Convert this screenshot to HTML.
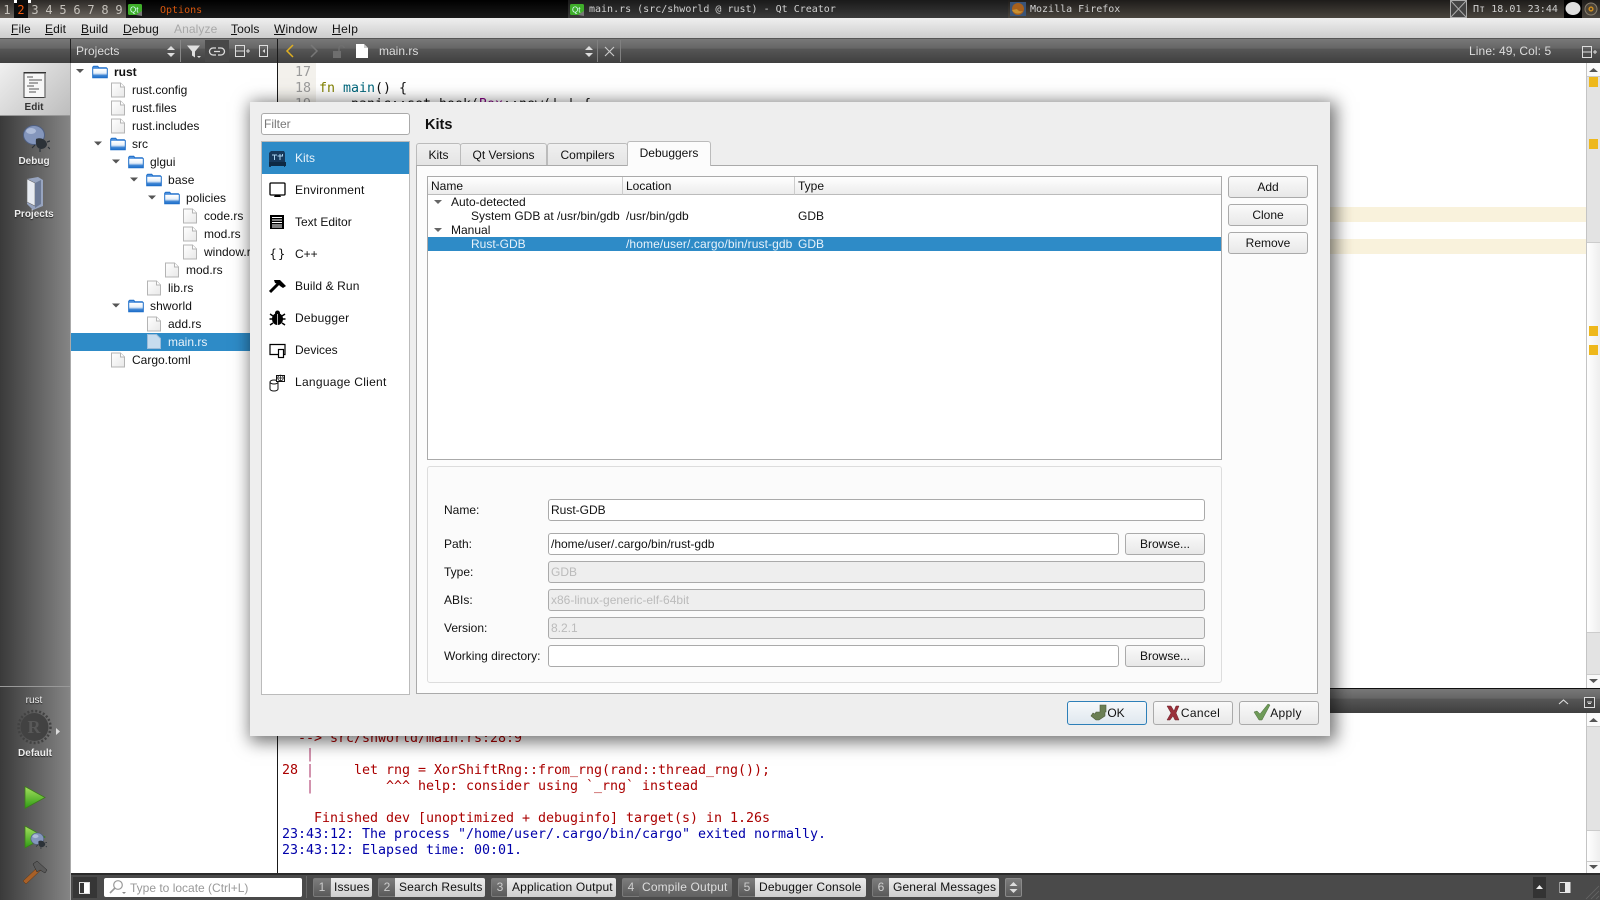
<!DOCTYPE html>
<html><head><meta charset="utf-8"><title>Qt Creator</title>
<style>
html,body{margin:0;padding:0;width:1600px;height:900px;overflow:hidden;background:#fff}
body{position:relative;font:12px/14px "Liberation Sans",sans-serif;color:#111}
.b,.t,svg.l{position:absolute}
.t{white-space:nowrap;height:14px;line-height:14px}
svg.l{left:0;top:0}
.m{font-family:"DejaVu Sans Mono","Liberation Mono",monospace;font-variant-ligatures:none;white-space:pre}
.c{font-size:13.33px;letter-spacing:-.025px;line-height:16px;height:16px}
.tb{font-size:10px;color:#d0d0d0}
.ws{font-size:12px;color:#c4c0ba;width:14px;text-align:center}
u{text-decoration:underline}
.lt{color:#ddd}
.mn{letter-spacing:.1px}
.rl{color:#eee;font-weight:bold;font-size:10px;text-align:center;left:0;width:68px;text-shadow:0 1px 1px #222}
.e{color:#aa0000}.bl{color:#0000aa}
.num{position:absolute;top:878px;height:17px;width:16px;line-height:17px;text-align:center;color:#ccc;background:linear-gradient(#7c7c7c,#5a5a5a);border:1px solid #7a7a7a;border-radius:2px 0 0 2px}
.lab{position:absolute;top:878px;height:19px;line-height:19px;padding-left:5px;box-sizing:border-box;color:#111;background:linear-gradient(#ececec,#cfcfcf);border-radius:0 2px 2px 0;white-space:nowrap;letter-spacing:.15px}
.btn{position:absolute;box-sizing:border-box;height:22px;line-height:20px;text-align:center;border:1px solid #aaa;border-radius:3px;background:linear-gradient(#fafafa,#e8e8e8);color:#111}
.inp{position:absolute;box-sizing:border-box;height:22px;line-height:20px;padding-left:2px;border:1px solid #aaa;border-radius:3px;background:#fff;white-space:nowrap}
.dis{background:#eee;color:#bbb}
.tab{position:absolute;top:143px;height:22px;box-sizing:border-box;line-height:23px;text-align:center;background:linear-gradient(#f0f0f0,#e4e4e4);border:1px solid #bbb;border-bottom:0;border-radius:3px 3px 0 0}
.hd{position:absolute;top:177px;height:18px;line-height:18px;box-sizing:border-box;padding-left:3px;background:linear-gradient(#fff,#ececec);border-right:1px solid #ccc;border-bottom:1px solid #bbb}
</style></head>
<body>
<!-- top panel -->
<div class="b" style="left:0;top:0;width:1600px;height:18px;background:linear-gradient(90deg,#1a1a18,#111 30%,#1c1a18 60%,#2a2622)"></div>
<div class="b" style="left:0;top:0;width:126px;height:18px;background:linear-gradient(#2c2926,#6a645e)"></div>
<div class="b" style="left:14px;top:0;width:14px;height:18px;background:#0a0a0a"></div>
<div class="b" style="left:126px;top:0;width:442px;height:18px;background:linear-gradient(#000,#1a1a1a)"></div>
<div class="b" style="left:568px;top:0;width:440px;height:18px;background:linear-gradient(#1a1a1a,#3a3a3a)"></div>
<div class="b" style="left:1008px;top:0;width:592px;height:18px;background:linear-gradient(#1e1c1a,#4a453e)"></div>
<div class="b" style="left:1564px;top:0;width:18px;height:18px;background:#000"></div>
<div class="b" style="left:14px;top:0;width:3px;height:3px;background:#fff"></div>
<div class="b" style="left:28px;top:0;width:3px;height:3px;background:#fff"></div>
<div class="t m ws" style="left:0;top:3px">1</div>
<div class="t m ws" style="left:14px;top:3px;color:#f05a10">2</div>
<div class="t m ws" style="left:28px;top:3px">3</div>
<div class="t m ws" style="left:42px;top:3px">4</div>
<div class="t m ws" style="left:56px;top:3px">5</div>
<div class="t m ws" style="left:70px;top:3px">6</div>
<div class="t m ws" style="left:84px;top:3px">7</div>
<div class="t m ws" style="left:98px;top:3px">8</div>
<div class="t m ws" style="left:112px;top:3px">9</div>
<div class="t m tb" style="left:160px;top:4px;color:#d8570e">Options</div>
<div class="t m tb" style="left:589px;top:3px">main.rs (src/shworld @ rust) - Qt Creator</div>
<div class="t m tb" style="left:1030px;top:3px">Mozilla Firefox</div>
<div class="t m tb" style="left:1473px;top:3px;letter-spacing:.05px">Пт 18.01 23:44</div>

<!-- menu -->
<div class="b" style="left:0;top:18px;width:1600px;height:20px;background:linear-gradient(#efefef,#cdcdcd);border-bottom:1px solid #555"></div>
<div class="t mn" style="left:11px;top:22px"><u>F</u>ile</div>
<div class="t mn" style="left:45px;top:22px"><u>E</u>dit</div>
<div class="t mn" style="left:81px;top:22px"><u>B</u>uild</div>
<div class="t mn" style="left:123px;top:22px"><u>D</u>ebug</div>
<div class="t mn" style="left:174px;top:22px;color:#a8a8a8">Analyze</div>
<div class="t mn" style="left:231px;top:22px"><u>T</u>ools</div>
<div class="t mn" style="left:274px;top:22px"><u>W</u>indow</div>
<div class="t" style="left:332px;top:22px;letter-spacing:.4px"><u>H</u>elp</div>

<!-- toolbar -->
<div class="b" style="left:0;top:39px;width:1600px;height:24px;background:linear-gradient(#787878,#666 38%,#565656 42%,#3f3f3f)"></div>
<div class="b" style="left:205px;top:40px;width:24px;height:22px;background:#484848"></div>
<div class="b" style="left:70px;top:39px;width:1px;height:24px;background:#222"></div>
<div class="b" style="left:180px;top:40px;width:1px;height:22px;background:#888"></div>
<div class="b" style="left:597px;top:40px;width:1px;height:22px;background:#808080"></div>
<div class="b" style="left:620px;top:40px;width:1px;height:22px;background:#808080"></div>
<div class="t lt" style="left:76px;top:44px">Projects</div>
<div class="t lt" style="left:379px;top:44px">main.rs</div>
<div class="t lt mn" style="left:1469px;top:44px">Line: 49, Col: 5</div>

<!-- left rail -->
<div class="b" style="left:0;top:63px;width:70px;height:837px;background:linear-gradient(90deg,#3a3a3a,#858585)"></div>
<div class="b" style="left:70px;top:63px;width:1px;height:837px;background:#aaa"></div>
<div class="b" style="left:0;top:63px;width:70px;height:52px;background:linear-gradient(135deg,#f0f0f0,#bdbdbd);border-bottom:1px solid #999"></div>
<div class="b" style="left:0;top:686px;width:70px;height:1px;background:#999"></div>
<div class="t rl" style="top:101px;color:#333;text-shadow:none">Edit</div>
<div class="t rl" style="top:155px">Debug</div>
<div class="t rl" style="top:208px">Projects</div>
<div class="t rl" style="top:694px;font-weight:normal">rust</div>
<div class="t rl" style="top:747px;width:70px">Default</div>

<!-- tree -->
<div class="b" style="left:71px;top:63px;width:206px;height:811px;background:#fff"></div>
<div class="b" style="left:71px;top:333px;width:206px;height:18px;background:#2e8bc7"></div>
<div class="b" style="left:277px;top:39px;width:1px;height:835px;background:#1a1a1a"></div>
<div class="t" style="left:114px;top:65px;font-weight:bold">rust</div>
<div class="t" style="left:132px;top:83px">rust.config</div>
<div class="t" style="left:132px;top:101px">rust.files</div>
<div class="t" style="left:132px;top:119px">rust.includes</div>
<div class="t" style="left:132px;top:137px">src</div>
<div class="t" style="left:150px;top:155px">glgui</div>
<div class="t" style="left:168px;top:173px;letter-spacing:.15px">base</div>
<div class="t" style="left:186px;top:191px">policies</div>
<div class="t" style="left:204px;top:209px">code.rs</div>
<div class="t" style="left:204px;top:227px">mod.rs</div>
<div class="t" style="left:204px;top:245px">window.rs</div>
<div class="t" style="left:186px;top:263px">mod.rs</div>
<div class="t" style="left:168px;top:281px">lib.rs</div>
<div class="t" style="left:150px;top:299px;letter-spacing:.1px">shworld</div>
<div class="t" style="left:168px;top:317px">add.rs</div>
<div class="t" style="left:168px;top:335px;color:#e8f2fa">main.rs</div>
<div class="t" style="left:132px;top:353px">Cargo.toml</div>

<!-- editor -->
<div class="b" style="left:278px;top:63px;width:38px;height:625px;background:#f3f1ec"></div>
<div class="b" style="left:316px;top:207px;width:1270px;height:15px;background:#f9f2dc"></div>
<div class="b" style="left:316px;top:239px;width:1270px;height:15px;background:#f9f2dc"></div>
<div class="t m c" style="left:295px;top:65px;color:#9a9a9a">17</div>
<div class="t m c" style="left:295px;top:81px;color:#9a9a9a">18</div>
<div class="t m c" style="left:295px;top:97px;color:#9a9a9a">19</div>
<div class="t m c" style="left:319px;top:81px"><span style="color:#808000">fn</span> <span style="color:#00677c">main</span>() {</div>
<div class="t m c" style="left:319px;top:97px">    panic::set_hook(<span style="color:#800080">Box</span>::new(|_| {</div>

<!-- scrollbars -->
<div class="b" style="left:1586px;top:63px;width:14px;height:625px;background:#e3e3e3;border-left:1px solid #c4c4c4;box-sizing:border-box"></div>
<div class="b" style="left:1587px;top:63px;width:13px;height:13px;background:#fafafa;border-bottom:1px solid #ccc"></div>
<div class="b" style="left:1587px;top:242px;width:13px;height:391px;background:linear-gradient(90deg,#fff,#eee);border-top:1px solid #ccc;border-bottom:1px solid #ccc;box-sizing:border-box"></div>
<div class="b" style="left:1587px;top:674px;width:13px;height:14px;background:#fafafa;border-top:1px solid #ccc;box-sizing:border-box"></div>
<div class="b" style="left:1589px;top:77px;width:9px;height:10px;background:#eeb81c"></div>
<div class="b" style="left:1589px;top:139px;width:9px;height:10px;background:#eeb81c"></div>
<div class="b" style="left:1589px;top:326px;width:9px;height:10px;background:#eeb81c"></div>
<div class="b" style="left:1589px;top:345px;width:9px;height:10px;background:#eeb81c"></div>

<!-- output header + output -->
<div class="b" style="left:278px;top:688px;width:1322px;height:25px;box-sizing:border-box;border-top:1px solid #111;background:linear-gradient(#787878,#666 38%,#565656 42%,#3f3f3f)"></div>
<div class="b" style="left:1586px;top:713px;width:14px;height:161px;background:#e3e3e3;border-left:1px solid #c4c4c4;box-sizing:border-box"></div>
<div class="b" style="left:1587px;top:713px;width:13px;height:13px;background:#fafafa;border-bottom:1px solid #ccc"></div>
<div class="b" style="left:1587px;top:830px;width:13px;height:31px;background:linear-gradient(90deg,#fff,#eee);border-top:1px solid #ccc;box-sizing:border-box"></div>
<div class="b" style="left:1587px;top:861px;width:13px;height:13px;background:#fafafa;border-top:1px solid #ccc;box-sizing:border-box"></div>
<div class="t m c e" style="left:282px;top:731px">  --&gt; src/shworld/main.rs:28:9</div>
<div class="t m c e" style="left:282px;top:747px">   <span style="color:#b04070">|</span></div>
<div class="t m c e" style="left:282px;top:763px">28 <span style="color:#b04070">|</span>     let rng = XorShiftRng::from_rng(rand::thread_rng());</div>
<div class="t m c e" style="left:282px;top:779px">   <span style="color:#b04070">|</span>         ^^^ help: consider using `_rng` instead</div>
<div class="t m c e" style="left:282px;top:811px">    Finished dev [unoptimized + debuginfo] target(s) in 1.26s</div>
<div class="t m c bl" style="left:282px;top:827px">23:43:12: The process "/home/user/.cargo/bin/cargo" exited normally.</div>
<div class="t m c bl" style="left:282px;top:843px">23:43:12: Elapsed time: 00:01.</div>

<!-- bottom bar -->
<div class="b" style="left:71px;top:873px;width:1529px;height:27px;box-sizing:border-box;border-top:2px solid #2a2a2a;background:#4a4a4a"></div>
<div class="b" style="left:73px;top:877px;width:24px;height:21px;background:#363636"></div>
<div class="b" style="left:1533px;top:877px;width:13px;height:21px;background:#333"></div>
<div class="b" style="left:104px;top:878px;width:198px;height:19px;background:#fff;border-radius:2px"></div>
<div class="b" style="left:306px;top:876px;width:1px;height:22px;background:#666"></div>
<div class="t" style="left:130px;top:881px;color:#999">Type to locate (Ctrl+L)</div>
<div class="num" style="left:313px">1</div><div class="lab" style="left:331px;width:41px;padding-left:3px">Issues</div>
<div class="num" style="left:378px">2</div><div class="lab" style="left:395px;width:90px;padding-left:4px">Search Results</div>
<div class="num" style="left:491px">3</div><div class="lab" style="left:507px;width:109px;padding-left:5px">Application Output</div>
<div class="num" style="left:622px">4</div><div class="lab" style="left:639px;width:93px;padding-left:3px;background:linear-gradient(#787878,#626262);color:#ddd">Compile Output</div>
<div class="num" style="left:738px">5</div><div class="lab" style="left:755px;width:111px;padding-left:4px">Debugger Console</div>
<div class="num" style="left:872px">6</div><div class="lab" style="left:889px;width:110px;padding-left:4px">General Messages</div>
<div class="b" style="left:1005px;top:878px;width:17px;height:19px;box-sizing:border-box;background:linear-gradient(#7c7c7c,#5a5a5a);border:1px solid #8a8a8a;border-radius:2px"></div>

<!-- base layer icons -->
<svg class="l" width="1600" height="900" viewBox="0 0 1600 900">
<defs>
<linearGradient id="fg" x1="0" y1="0" x2="0" y2="1"><stop offset="0" stop-color="#4c8fdc"/><stop offset=".2" stop-color="#4c8fdc"/><stop offset=".26" stop-color="#fff"/><stop offset=".6" stop-color="#e6eff9"/><stop offset=".82" stop-color="#2f7bd0"/><stop offset="1" stop-color="#2f7bd0"/></linearGradient>
<linearGradient id="pg" x1="0" y1="0" x2="1" y2="1"><stop offset="0" stop-color="#fff"/><stop offset="1" stop-color="#e8e8e8"/></linearGradient>
<linearGradient id="gr" x1="0" y1="0" x2="0" y2="1"><stop offset="0" stop-color="#a6e060"/><stop offset="1" stop-color="#2d9a12"/></linearGradient>
<symbol id="file" viewBox="0 0 14 15" width="14" height="15"><path d="M.5.5h9l4 4v10H.5z" fill="url(#pg)" stroke="#b4b4b4"/><path d="M9.5.5v4h4" fill="#fff" stroke="#b4b4b4"/></symbol>
<symbol id="fold" viewBox="0 0 16 13" width="16" height="13"><path d="M.7 12.3V1.7L1.700.7h4l1.200 1.500h7.400l1 1v9.100z" fill="url(#fg)" stroke="#1c6dc8"/></symbol>
<symbol id="ar" viewBox="0 0 8 4" width="8" height="4"><path d="M0 0h8L4 4z" fill="#555"/></symbol>
<symbol id="ud" viewBox="0 0 8 11" width="8" height="11"><path d="M4 0l4 4H0zM4 11L0 7h8z" fill="#ddd"/></symbol>
<symbol id="split" viewBox="0 0 15 12" width="15" height="12"><path d="M.5.5h9v11h-9zM.5 6h9M11 6h4M13 4v4" fill="none" stroke="#ddd"/></symbol>
<symbol id="bug" viewBox="0 0 28 28" width="28" height="28"><ellipse cx="12" cy="11" rx="10.500" ry="9.500" fill="#8496bc" stroke="#4f5f80"/><ellipse cx="9" cy="7" rx="5" ry="3" fill="#aebcd8"/><path d="M14 15c4-2 10 0 11 5 0 3-3 5-6 5s-6-3-5-10z" fill="#2c3238"/><path d="M13 21l-3 3M18 25v3M25 18l3-1M26 23l2 2" stroke="#2c3238" stroke-width="1.200"/></symbol>
</defs>
<!-- top bar icons -->
<rect x="128" y="4" width="14" height="11" rx="1.500" fill="#3fae2a"/><path d="M136 15l6-4v5z" fill="#777"/><text x="130" y="12.500" font-family="Liberation Sans" font-size="8" fill="#dff">Qt</text>
<rect x="570" y="4" width="14" height="11" rx="1.500" fill="#3fae2a"/><path d="M578 15l6-4v5z" fill="#777"/><text x="572" y="12.500" font-family="Liberation Sans" font-size="8" fill="#dff">Qt</text>
<rect x="1010" y="2" width="16" height="14" fill="#3a5478"/><circle cx="1018" cy="9" r="6" fill="#a8601c"/><path d="M1012 10c2 4 8 5 11 1-2 1-5 0-6-2z" fill="#c89030"/>
<rect x="1450.500" y=".5" width="16" height="17" fill="#444" stroke="#aaa"/><path d="M1451 1l15 16M1466 1l-15 16" stroke="#aaa"/>
<ellipse cx="1573" cy="8.500" rx="7.500" ry="6.500" fill="#ddd"/>
<circle cx="1591" cy="9" r="6" fill="#4a4338" stroke="#8a8070"/><circle cx="1591" cy="9" r="2.600" fill="#c88a20"/><circle cx="1591" cy="9" r="1" fill="#333"/>
<!-- toolbar icons -->
<use href="#ud" x="167" y="46"/>
<path d="M187 45.500h13l-5 6v6l-3-2v-4z" fill="#e0e0e0"/><path d="M197 56h4l-2 2z" fill="#ddd"/>
<path d="M216 48h-3a3.500 3.500 0 000 7h3M218 48h3a3.500 3.500 0 010 7h-3M214 51.500h6" fill="none" stroke="#ddd" stroke-width="1.300"/>
<use href="#split" x="235" y="45"/>
<rect x="259.500" y="45.500" width="8" height="11" fill="none" stroke="#ddd"/><path d="M265 49v4l-2.500-2z" fill="#ddd"/>
<path d="M293 45l-6 6 6 6" fill="none" stroke="#e0b020" stroke-width="1.500"/>
<path d="M311 45l6 6-6 6" fill="none" stroke="#777" stroke-width="1.500"/>
<rect x="333" y="51" width="8" height="7" fill="#6e6e6e"/><path d="M339 51v-3a2.500 2.500 0 015 0" fill="none" stroke="#6e6e6e" stroke-width="1.400"/>
<path d="M356 44h8l4 4v10h-12z" fill="#fff"/><path d="M364 44v4h4" fill="#ccc"/>
<use href="#ud" x="585" y="46"/>
<path d="M605 47l9 9M614 47l-9 9" stroke="#ccc" stroke-width="1.100"/>
<use href="#split" x="1582" y="46"/>
<!-- rail icons -->
<path d="M24 72.500h21v25H24z" fill="#f7f7f7" stroke="#444"/><rect x="24" y="72" width="22" height="1.500" fill="#333"/><path d="M27 77h6M29 80h13M29 83h9M27 86h7M29 89h10M29 92h7" stroke="#555"/><path d="M45 73v25" stroke="#777" stroke-width="1.400"/>
<use href="#bug" x="22" y="124"/>
<path d="M27 179l11-2 5 3v26l-10 4-6-6z" fill="#97a4bf"/><path d="M27 179l8 4v23l-8-4z" fill="#e8ecf2" stroke="#666" stroke-width=".6"/><path d="M35 183l6-3v24l-6 4z" fill="#6c7a96"/>
<circle cx="34.500" cy="727" r="14" fill="#424242"/><circle cx="34.500" cy="727" r="16" fill="none" stroke="#424242" stroke-width="2.500" stroke-dasharray="2 2"/><text x="27.500" y="733" font-family="Liberation Serif" font-size="18" font-weight="bold" fill="#585858">R</text>
<path d="M56 728v7l4-3.500z" fill="#ddd"/>
<path d="M25 786.500l20 11-20 11z" fill="url(#gr)" stroke="#3c7c1c" stroke-width=".8"/>
<path d="M25 826l20 11-20 11z" fill="url(#gr)" stroke="#3c7c1c" stroke-width=".8"/>
<use href="#bug" x="30" y="832" width="17" height="17"/>
<path d="M23 881l16-15 3 3-16 15z" fill="#a86028" stroke="#5a3210" stroke-width=".5"/><path d="M33 864l4-3 10 9-2 3-5-3-3 2z" fill="#5a5a5a" stroke="#222" stroke-width=".5"/>
<!-- tree icons -->
<use href="#ar" x="76" y="69"/><use href="#fold" x="92" y="65.500"/>
<use href="#file" x="111" y="82.500"/><use href="#file" x="111" y="100.500"/><use href="#file" x="111" y="118.500"/>
<use href="#ar" x="94" y="141.500"/><use href="#fold" x="110" y="137.500"/>
<use href="#ar" x="112" y="159.500"/><use href="#fold" x="128" y="155.500"/>
<use href="#ar" x="130" y="177.500"/><use href="#fold" x="146" y="173.500"/>
<use href="#ar" x="148" y="195.500"/><use href="#fold" x="164" y="191.500"/>
<use href="#file" x="183" y="208.500"/><use href="#file" x="183" y="226.500"/><use href="#file" x="183" y="244.500"/>
<use href="#file" x="165" y="262.500"/><use href="#file" x="147" y="280.500"/>
<use href="#ar" x="112" y="303.500"/><use href="#fold" x="128" y="299.500"/>
<use href="#file" x="147" y="316.500"/>
<path d="M147.500 334.500h9l4 4v10h-13z" fill="#c6dcee" stroke="#9abbd8"/>
<use href="#file" x="111" y="352.500"/>
<!-- scroll arrows -->
<path d="M1589 72l4.500-4 4.500 4z" fill="#555"/><path d="M1589 679l4.500 4 4.500-4z" fill="#555"/>
<path d="M1589 722l4.500-4 4.500 4z" fill="#555"/><path d="M1589 865l4.500 4 4.500-4z" fill="#555"/>
<!-- output header icons -->
<path d="M1559 704l4.500-4 4.500 4" fill="none" stroke="#ddd" stroke-width="1.100"/>
<rect x="1584.500" y="697.500" width="10" height="10" fill="#444" stroke="#ddd"/><path d="M1587 702h5M1588 703.500h3" stroke="#ddd"/>
<!-- bottom icons -->
<rect x="79.500" y="882.500" width="10" height="11" fill="#fff" stroke="#ddd"/><rect x="80" y="883" width="4" height="10" fill="#363636"/>
<circle cx="118" cy="885" r="4.300" fill="none" stroke="#999" stroke-width="1.200"/><path d="M115 888l-5 5" stroke="#999" stroke-width="1.600"/><path d="M122 892h4l-2 2z" fill="#888"/>
<use href="#ud" x="1009.500" y="882"/>
<path d="M1536 889l3.500-4 3.500 4z" fill="#eee"/>
<rect x="1559.500" y="882" width="11" height="11" fill="#e8e8e8"/><rect x="1560" y="883" width="5" height="9" fill="#444"/>
<path d="M1586 899l13-13M1591 899l8-8M1596 899l3-3" stroke="#666" stroke-width=".8"/>
</svg>

<!-- dialog -->
<div class="b" style="left:250px;top:102px;width:1080px;height:634px;background:#eee;box-shadow:3px 3px 16px 3px rgba(0,0,0,.55)"></div>
<div class="inp" style="left:261px;top:113px;width:149px;height:22px;color:#777">Filter</div>
<div class="b" style="left:261px;top:141px;width:149px;height:554px;box-sizing:border-box;background:#fff;border:1px solid #bbb"></div>
<div class="b" style="left:262px;top:142px;width:147px;height:32px;background:#2e8bc7"></div>
<div class="t" style="left:295px;top:151px;color:#e8f2fa">Kits</div>
<div class="t" style="left:295px;top:183px;letter-spacing:.2px">Environment</div>
<div class="t" style="left:295px;top:215px">Text Editor</div>
<div class="t" style="left:295px;top:247px">C++</div>
<div class="t" style="left:295px;top:279px;letter-spacing:.1px">Build &amp; Run</div>
<div class="t" style="left:295px;top:311px;letter-spacing:.2px">Debugger</div>
<div class="t" style="left:295px;top:343px">Devices</div>
<div class="t" style="left:295px;top:375px;letter-spacing:.28px">Language Client</div>
<div class="t" style="left:425px;top:117px;font-size:14.500px;font-weight:bold;height:16px;line-height:16px">Kits</div>

<div class="b" style="left:416px;top:165px;width:902px;height:529px;box-sizing:border-box;background:#fcfcfc;border:1px solid #aaa"></div>
<div class="tab" style="left:416px;width:45px">Kits</div>
<div class="tab" style="left:460px;width:87px">Qt Versions</div>
<div class="tab" style="left:547px;width:81px">Compilers</div>
<div class="tab" style="left:627px;top:141px;width:84px;height:25px;background:#fcfcfc;line-height:23px;z-index:2">Debuggers</div>

<div class="b" style="left:427px;top:176px;width:795px;height:284px;box-sizing:border-box;background:#fff;border:1px solid #aaa"></div>
<div class="hd" style="left:428px;width:195px">Name</div>
<div class="hd" style="left:623px;width:172px">Location</div>
<div class="hd" style="left:795px;width:426px;border-right:0">Type</div>
<div class="b" style="left:428px;top:237px;width:793px;height:14px;background:#2e8bc7"></div>
<div class="t" style="left:451px;top:195px">Auto-detected</div>
<div class="t" style="left:471px;top:209px">System GDB at /usr/bin/gdb</div>
<div class="t" style="left:626px;top:209px">/usr/bin/gdb</div>
<div class="t" style="left:798px;top:209px">GDB</div>
<div class="t" style="left:451px;top:223px">Manual</div>
<div class="t" style="left:471px;top:237px;color:#e8f2fa">Rust-GDB</div>
<div class="t" style="left:626px;top:237px;color:#e8f2fa;letter-spacing:.1px">/home/user/.cargo/bin/rust-gdb</div>
<div class="t" style="left:798px;top:237px;color:#e8f2fa">GDB</div>

<div class="btn" style="left:1228px;top:176px;width:80px">Add</div>
<div class="btn" style="left:1228px;top:204px;width:80px">Clone</div>
<div class="btn" style="left:1228px;top:232px;width:80px">Remove</div>

<div class="b" style="left:427px;top:466px;width:795px;height:217px;box-sizing:border-box;background:#fbfbfb;border:1px solid #ddd;border-radius:3px"></div>
<div class="t" style="left:444px;top:503px">Name:</div>
<div class="inp" style="left:548px;top:499px;width:657px">Rust-GDB</div>
<div class="t" style="left:444px;top:537px">Path:</div>
<div class="inp" style="left:548px;top:533px;width:571px">/home/user/.cargo/bin/rust-gdb</div>
<div class="btn" style="left:1125px;top:533px;width:80px">Browse...</div>
<div class="t" style="left:444px;top:565px">Type:</div>
<div class="inp dis" style="left:548px;top:561px;width:657px">GDB</div>
<div class="t" style="left:444px;top:593px">ABIs:</div>
<div class="inp dis" style="left:548px;top:589px;width:657px">x86-linux-generic-elf-64bit</div>
<div class="t" style="left:444px;top:621px">Version:</div>
<div class="inp dis" style="left:548px;top:617px;width:657px">8.2.1</div>
<div class="t" style="left:444px;top:649px">Working directory:</div>
<div class="inp" style="left:548px;top:645px;width:571px"></div>
<div class="btn" style="left:1125px;top:645px;width:80px">Browse...</div>

<div class="btn" style="left:1067px;top:701px;width:80px;height:24px;line-height:22px;padding-left:18px;border-color:#2d7fb8;background:linear-gradient(#f6f8fa,#dfe8ef)">OK</div>
<div class="btn" style="left:1153px;top:701px;width:80px;height:24px;line-height:22px;padding-left:15px;letter-spacing:.3px">Cancel</div>
<div class="btn" style="left:1239px;top:701px;width:80px;height:24px;line-height:22px;padding-left:14px;letter-spacing:.3px">Apply</div>

<!-- dialog icons -->
<svg class="l" width="1600" height="900" viewBox="0 0 1600 900" style="z-index:3">
<!-- Kits -->
<path d="M271 151h13l1 2v14h-1v-1h-13v1h-2v-14z" fill="#16385a"/><rect x="269" y="162" width="17" height="4" fill="#0e2a44"/><path d="M272 155h5M274.500 155v5M280 154v6M282.500 154v2h-5" stroke="#a8d0ec" stroke-width="1" fill="none"/>
<!-- Environment -->
<rect x="270" y="183" width="15" height="12" rx="1" fill="#fff" stroke="#000" stroke-width="1.300"/><path d="M274 197h7l-1-2h-5z" fill="#000"/>
<!-- Text Editor -->
<rect x="270" y="215" width="14" height="14" fill="#000"/><path d="M272 217.500h10M272 220h10M272 222.500h10M272 225h10M272 227h10" stroke="#fff" stroke-width=".9"/>
<!-- C++ -->
<text x="269.500" y="258" font-family="DejaVu Sans Mono" font-size="12" fill="#111">{</text><text x="278" y="258" font-family="DejaVu Sans Mono" font-size="12" fill="#111">}</text>
<!-- Build -->
<path d="M270 292l10-10" stroke="#000" stroke-width="3"/><path d="M274 280h6l6 6-3 2-3-2-2-2-3-1z" fill="#000"/>
<!-- Debugger -->
<ellipse cx="277.500" cy="319" rx="5.500" ry="6" fill="#000"/><circle cx="277.500" cy="313" r="2.500" fill="#000"/><path d="M270 314l3 2M285 314l-3 2M269.500 319h3M285.500 319h-3M270 325l3-2M285 325l-3-2" stroke="#000" stroke-width="1.500"/><path d="M277.500 314v11" stroke="#fff" stroke-width=".7"/>
<!-- Devices -->
<path d="M270 344.500h15v10h-15z" fill="#fff" stroke="#000" stroke-width="1.200"/><rect x="278.500" y="349.500" width="5" height="8" fill="#fff" stroke="#000" stroke-width="1.200"/>
<!-- Language Client -->
<path d="M270 382v7a4 2 0 008 0V382" fill="#fff" stroke="#111"/><ellipse cx="274" cy="382" rx="4" ry="2" fill="#fff" stroke="#111"/><rect x="276.500" y="375.500" width="8" height="6" fill="#fff" stroke="#111"/><circle cx="280.500" cy="378" r="2.800" fill="none" stroke="#111" stroke-width=".8"/><path d="M280.500 375v6M277.500 378h6" stroke="#111" stroke-width=".7"/>
<!-- tree arrows -->
<path d="M434 200h8l-4 4zM434 228h8l-4 4z" fill="#666"/>
<!-- OK/Cancel/Apply -->
<path d="M1106 705h-6v7h-4l-1 2-2-1-2 3 5 4h3l6-4v-4h1z" fill="#6a7f54" stroke="#4c5a3a" stroke-width=".6"/>
<path d="M1167 706h4l3 5 2-5h3l-3 7 3 7h-4l-2-4-3 4h-3l4-7z" fill="#9a2f3a" stroke="#6a2028" stroke-width=".5"/>
<path d="M1254 712l3-1 3 3 8-10 2 1-8 15h-3z" fill="#6e9a58" stroke="#4c6c3c" stroke-width=".5"/>
</svg>
</body></html>
